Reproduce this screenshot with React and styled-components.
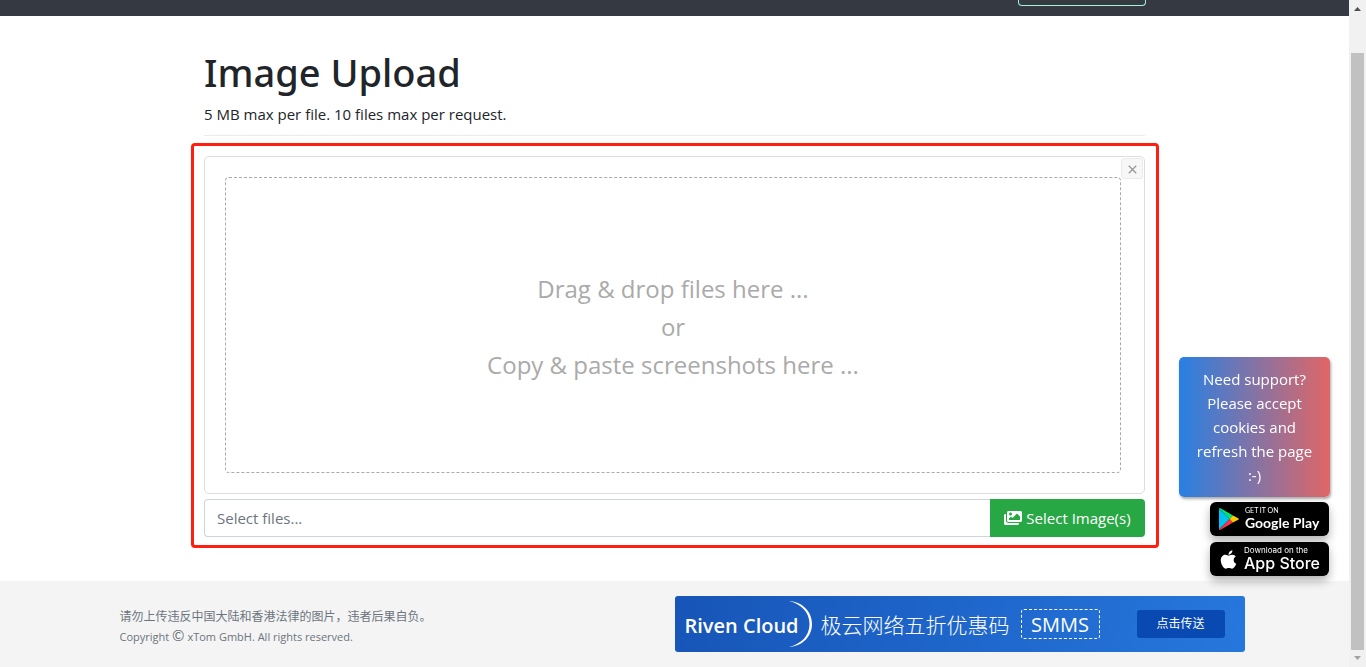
import React from "react";
import styled, { createGlobalStyle } from "styled-components";
import { FaApple, FaImages } from "react-icons/fa";

const GlobalStyle = createGlobalStyle`
  *, *::before, *::after { box-sizing: border-box; }
  body {
    margin: 0;
    background: #fff;
    color: #212529;
    font-family: "Open Sans", "Noto Sans", "Noto Sans CJK SC", sans-serif;
    font-size: 15px;
    line-height: 24px;
  }
  button, input { font: inherit; }
`;

const Shell = styled.div`
  display: flex;
  min-height: 100vh;
`;

const Page = styled.div`
  display: flex;
  flex: 1;
  flex-direction: column;
  min-width: 0;
`;

const Container = styled.div`
  width: 100%;
  max-width: ${(p) => p.$max}px;
  margin: 0 auto;
`;

const NavBar = styled.header`
  height: 16px;
  background: #353941;
`;

const NavInner = styled(Container)`
  display: flex;
  justify-content: flex-end;
`;

const NavButton = styled.button`
  width: 128px;
  height: 6px;
  padding: 0;
  background: transparent;
  border: 1px solid #a3f3dc;
  border-top: 0;
  border-radius: 0 0 4px 4px;
`;

const Main = styled.main`
  flex: 1;
  padding: 32px 0;
`;

const Title = styled.h1`
  margin: 0 0 6px;
  font-family: "Noto Sans", sans-serif;
  font-size: 38px;
  font-weight: 500;
  line-height: 48px;
`;

const Limits = styled.p`
  margin: 0;
`;

const Rule = styled.hr`
  height: 1px;
  margin: 9px 0 7px;
  border: 0;
  background: #ebebeb;
`;

const Highlight = styled.section`
  margin: 0 -14px 0 -13px;
  padding: 10px 11px 8px 10px;
  border: 3px solid #ff1f10;
  border-radius: 4px;
`;

const Preview = styled.div`
  position: relative;
  margin-bottom: 5px;
  padding: 20px 23px 20px 20px;
  border: 1px solid #ddd;
  border-radius: 5px;
`;

const CloseButton = styled.button`
  position: absolute;
  top: 1px;
  right: 1px;
  display: grid;
  place-items: center;
  width: 22px;
  height: 21px;
  padding: 2px 0 0;
  color: #999;
  background: #f7f7f7;
  border: 1px solid #ebebeb;
  border-radius: 3px;
`;

const DropZone = styled.div`
  display: flex;
  flex-direction: column;
  justify-content: center;
  min-height: 296px;
  padding-top: 4px;
  border: 1px dashed #aaa;
  border-radius: 4px;
  color: #aaa;
  font-size: 24px;
  line-height: 38px;
  text-align: center;
`;

const DropText = styled.p`
  margin: 0;
`;

const FileRow = styled.div`
  display: flex;
`;

const FileInput = styled.input`
  flex: 1;
  min-width: 0;
  height: 38px;
  padding: 6px 12px;
  border: 1px solid #ced4da;
  border-right: 0;
  border-radius: 4px 0 0 4px;
  background: #fff;
  color: #495057;
  &::placeholder { color: #6c757d; opacity: 1; }
`;

const SelectButton = styled.button`
  display: flex;
  align-items: center;
  justify-content: center;
  gap: 4px;
  width: 155px;
  padding: 0;
  border: 0;
  border-radius: 0 4px 4px 0;
  background: #28a745;
  color: #fff;
  white-space: nowrap;
`;

const Footer = styled.footer`
  padding: 15px 0;
  background: #f4f4f4;
`;

const FooterInner = styled(Container)`
  display: flex;
  align-items: center;
  padding-left: 15px;
`;

const Legal = styled.div`
  flex: 1;
  padding-top: 5px;
  color: #6c757d;
  font-size: 12px;
  line-height: 20px;
`;

const LegalLine = styled.p`
  margin: 0;
`;

const Copyright = styled.p`
  margin: 0;
  font-size: 11px;
`;

const CopyMark = styled.span`
  font-family: "Noto Sans CJK SC", sans-serif;
  font-size: 15px;
  line-height: 1;
`;

const Banner = styled.div`
  display: flex;
  align-items: center;
  width: 570px;
  height: 56px;
  padding: 0 20px 0 10px;
  border-radius: 3px;
  background: linear-gradient(100deg, #1755b8, #2677dd);
  color: #fff;
  font-size: 20px;
  white-space: nowrap;
`;

const Brand = styled.div`
  display: flex;
  align-items: center;
  width: 136px;
  font-weight: 600;
`;

const BrandName = styled.span`
  padding-top: 3px;
`;

const Arc = styled.svg`
  flex: none;
  margin-left: -10px;
`;

const Offer = styled.span`
  width: 200px;
  font-family: "Noto Sans CJK SC", sans-serif;
  font-size: 21px;
  font-weight: 300;
`;

const Coupon = styled.span`
  width: 79px;
  padding-top: 1px;
  border: 1px dashed #fff;
  border-radius: 3px;
  line-height: 27px;
  text-align: center;
`;

const BannerButton = styled.button`
  width: 88px;
  height: 28px;
  margin-left: auto;
  padding: 0;
  border: 0;
  border-radius: 3px;
  background: #094ab2;
  color: #fff;
  font-size: 12px;
`;

const Floating = styled.aside`
  position: fixed;
  right: 36px;
  bottom: 91px;
  display: flex;
  flex-direction: column;
  align-items: flex-end;
`;

const Support = styled.div`
  width: 151px;
  margin-bottom: 5px;
  padding: 10px 15px;
  border-radius: 5px;
  background: linear-gradient(90deg, #2780e3, #e06666);
  box-shadow: 1px 2px 3px rgba(0, 0, 0, 0.35);
  color: #fff;
  text-align: center;
`;

const StoreLink = styled.a`
  display: flex;
  align-items: center;
  gap: ${(p) => p.$gap}px;
  width: 119px;
  height: 34px;
  margin: 0 1px 6px 0;
  padding-left: 8px;
  border-radius: 6px;
  background: #000;
  box-shadow: 0 5px 10px rgba(0, 0, 0, 0.3);
  color: #fff;
  font-family: ${(p) => p.$font}, sans-serif;
  text-decoration: none;
  white-space: nowrap;

  &:last-child { margin-bottom: 0; }
`;

const StoreText = styled.span`
  display: flex;
  flex-direction: column;
  gap: 1px;
  padding-bottom: 3px;
`;

const StoreSmall = styled.span`
  font-size: ${(p) => p.$size}px;
  line-height: 10px;
`;

const StoreName = styled.span`
  font-size: ${(p) => p.$size}px;
  font-weight: ${(p) => p.$weight};
  line-height: 14px;
`;

const ScrollTrack = styled.div`
  position: sticky;
  top: 0;
  display: flex;
  flex-direction: column;
  align-items: center;
  width: 17px;
  height: 100vh;
  background: #f1f1f1;
`;

const ScrollArrow = styled.svg`
  flex: none;
  width: 17px;
  height: 17px;
`;

const ScrollThumb = styled.div`
  flex: 1;
  width: 13px;
  margin-top: 36px;
  background: #c1c1c1;
`;

function PlayLogo() {
  return (
    <svg width="22" height="24" viewBox="0 0 22 24" aria-hidden="true">
      <path d="M1 1.400v21.200L11.600 12z" fill="#00c3f5" />
      <path d="M1 1.200C1.500.8 2 .9 2.600 1.200L15 8.500 11.600 12z" fill="#00e478" />
      <path d="M1 22.800c.5.400 1 .3 1.600 0L15 15.500 11.600 12z" fill="#f23a4b" />
      <path d="M15 8.500l5.200 2.700c.9.500.9 1.100 0 1.600L15 15.500 11.600 12z" fill="#ffc900" />
    </svg>
  );
}

export default function App() {
  return (
    <>
      <GlobalStyle />
      <Shell>
        <Page>
          <NavBar>
            <NavInner $max={943}>
              <NavButton aria-label="Account" />
            </NavInner>
          </NavBar>
          <Main>
            <Container $max={941}>
              <Title>Image Upload</Title>
              <Limits>5 MB max per file. 10 files max per request.</Limits>
              <Rule />
              <Highlight>
                <Preview>
                  <CloseButton type="button" aria-label="Close">
                    <svg width="9" height="9" viewBox="0 0 9 9" aria-hidden="true">
                      <path d="M.8.8l7.400 7.400M8.200.8L.8 8.200" stroke="currentColor" strokeWidth="1.300" />
                    </svg>
                  </CloseButton>
                  <DropZone>
                    <DropText>Drag &amp; drop files here ...</DropText>
                    <DropText>or</DropText>
                    <DropText>Copy &amp; paste screenshots here ...</DropText>
                  </DropZone>
                </Preview>
                <FileRow>
                  <FileInput aria-label="Select files" placeholder="Select files..." readOnly />
                  <SelectButton type="button">
                    <FaImages size={18} aria-hidden="true" />
                    Select Image(s)
                  </SelectButton>
                </FileRow>
              </Highlight>
            </Container>
          </Main>
          <Footer>
            <FooterInner $max={1140}>
              <Legal>
                <LegalLine lang="zh-CN">请勿上传违反中国大陆和香港法律的图片，违者后果自负。</LegalLine>
                <Copyright>
                  Copyright <CopyMark>©</CopyMark> xTom GmbH. All rights reserved.
                </Copyright>
              </Legal>
              <Banner lang="zh-CN">
                <Brand>
                  <BrandName>Riven Cloud</BrandName>
                  <Arc width="24" height="46" viewBox="0 0 24 46" aria-hidden="true">
                    <path d="M0 0C14 1 23 11 23 23S14 45 0 46C12 43 20.500 35 20.500 23S12 3 0 0z" fill="#fff" />
                  </Arc>
                </Brand>
                <Offer>极云网络五折优惠码</Offer>
                <Coupon>SMMS</Coupon>
                <BannerButton type="button">点击传送</BannerButton>
              </Banner>
            </FooterInner>
          </Footer>
        </Page>
        <ScrollTrack aria-hidden="true">
          <ScrollArrow viewBox="0 0 17 17">
            <path d="M5 11l3.500-4 3.500 4z" fill="#505050" />
          </ScrollArrow>
          <ScrollThumb />
          <ScrollArrow viewBox="0 0 17 17">
            <path d="M5 6l3.500 4L12 6z" fill="#a3a3a3" />
          </ScrollArrow>
        </ScrollTrack>
      </Shell>
      <Floating>
        <Support>Need support? Please accept cookies and refresh the page :-)</Support>
        <StoreLink href="#google-play" $gap={5} $font="Lato">
          <PlayLogo />
          <StoreText>
            <StoreSmall $size={7}>GET IT ON</StoreSmall>
            <StoreName $size={14} $weight={700}>Google Play</StoreName>
          </StoreText>
        </StoreLink>
        <StoreLink href="#app-store" $gap={5} $font="Inter">
          <FaApple size={21} aria-hidden="true" />
          <StoreText>
            <StoreSmall $size={8}>Download on the</StoreSmall>
            <StoreName $size={16} $weight={500}>App Store</StoreName>
          </StoreText>
        </StoreLink>
      </Floating>
    </>
  );
}
